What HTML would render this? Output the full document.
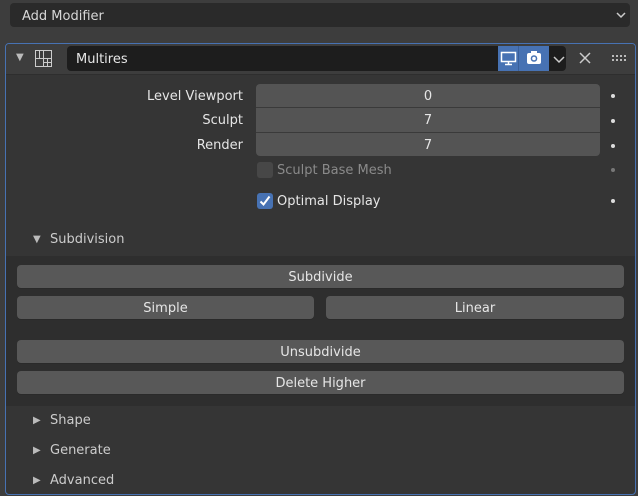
<!DOCTYPE html><html><head><style>
body{margin:0;width:638px;height:496px;background:#3d3d3d;font-family:"DejaVu Sans","Liberation Sans",sans-serif;font-size:13px;color:#e6e6e6;position:relative;overflow:hidden}
.a{position:absolute}
.btn{position:absolute;background:#585858;border-radius:4px;text-align:center;line-height:25px;height:23px;box-shadow:0 1px 0 #2a2a2a}
.lbl{position:absolute;text-align:right;width:243px;left:0;line-height:25px}
.dot{position:absolute;left:611px;width:4px;height:4px;border-radius:2px;background:#ddd}
.tri{position:absolute;color:#bbb;font-size:10px}
</style></head><body>
<div class="a" style="left:10px;top:3px;width:620px;height:24px;background:#2a2a2a;border-radius:4px"></div>
<div class="a" style="left:22px;top:4px;line-height:25px;color:#d8d8d8">Add Modifier</div>
<svg class="a" style="left:616px;top:12px" width="10" height="7"><path d="M1 1L5 5L9 1" stroke="#ccc" stroke-width="1.5" fill="none"/></svg>
<div class="a" style="left:5px;top:43px;width:629px;height:450px;border:1px solid #4772b3;border-radius:4px;background:#353535;overflow:hidden">
 <div class="a" style="left:0;top:0;width:629px;height:30px;background:#3d3d3d;border-bottom:1px solid #2e2e2e"></div>
 <div class="a" style="left:0;top:212px;width:629px;height:150px;background:#2e2e2e"></div>
</div>
<div class="tri" style="left:16px;top:52px">▼</div>
<svg class="a" style="left:35px;top:50px" width="17" height="17"><g stroke="#ccc" stroke-width="1" fill="none"><rect x="0.5" y="0.5" width="16" height="16"/><path d="M8.5 0V17M12.5 8V17M0 8.5H17M8 12.5H17M4.5 0V8"/></g></svg>
<div class="a" style="left:67px;top:46px;width:499px;height:25px;background:#1d1d1d;border-radius:4px"></div>
<div class="a" style="left:76px;top:47px;line-height:25px">Multires</div>
<div class="a" style="left:498px;top:46px;width:20px;height:25px;background:#4772b3"></div>
<div class="a" style="left:518px;top:46px;width:30px;height:25px;background:#4772b3;border-left:1px solid #3a5f99"></div>
<svg class="a" style="left:500px;top:51px" width="18" height="15"><rect x="1.5" y="1.5" width="14" height="9" stroke="#fff" stroke-width="1.5" fill="none"/><path d="M8.5 11V13M5 13.5H12" stroke="#fff" stroke-width="1.5"/></svg>
<svg class="a" style="left:526px;top:50px" width="16" height="16"><rect x="1" y="3" width="14" height="11" rx="2" fill="#fff"/><rect x="5" y="1" width="6" height="3" fill="#fff"/><circle cx="8" cy="8.5" r="3.3" fill="#4772b3"/><circle cx="8" cy="8.5" r="1.8" fill="#fff"/></svg>
<svg class="a" style="left:553px;top:56px" width="12" height="8"><path d="M1 1L6 6L11 1" stroke="#ccc" stroke-width="1.5" fill="none"/></svg>
<svg class="a" style="left:579px;top:52px" width="12" height="12"><path d="M1 1L11 11M11 1L1 11" stroke="#ccc" stroke-width="1.5"/></svg>
<svg class="a" style="left:612px;top:55px" width="14" height="6"><g fill="#bbb"><rect x="0" y="0" width="2" height="2"/><rect x="4" y="0" width="2" height="2"/><rect x="8" y="0" width="2" height="2"/><rect x="12" y="0" width="2" height="2"/><rect x="0" y="4" width="2" height="2"/><rect x="4" y="4" width="2" height="2"/><rect x="8" y="4" width="2" height="2"/><rect x="12" y="4" width="2" height="2"/></g></svg>

<div class="lbl" style="top:84px">Level Viewport</div>
<div class="lbl" style="top:108px">Sculpt</div>
<div class="lbl" style="top:133px">Render</div>
<div class="a" style="left:256px;top:84px;width:344px;height:72px;background:#545454;border-radius:4px"></div>
<div class="a" style="left:256px;top:107px;width:344px;height:1px;background:#3a3a3a"></div>
<div class="a" style="left:256px;top:132px;width:344px;height:1px;background:#3a3a3a"></div>
<div class="a" style="left:256px;top:84px;width:344px;line-height:25px;text-align:center">0</div>
<div class="a" style="left:256px;top:108px;width:344px;line-height:25px;text-align:center">7</div>
<div class="a" style="left:256px;top:133px;width:344px;line-height:25px;text-align:center">7</div>
<div class="dot" style="top:94px"></div><div class="dot" style="top:119px"></div><div class="dot" style="top:144px"></div>
<div class="a" style="left:257px;top:162px;width:16px;height:16px;background:#474747;border-radius:3px"></div>
<div class="a" style="left:277px;top:160px;line-height:22px;color:#8a8a8a">Sculpt Base Mesh</div>
<div class="dot" style="top:168px;background:#777"></div>
<div class="a" style="left:257px;top:193px;width:16px;height:16px;background:#4772b3;border-radius:3px"></div>
<svg class="a" style="left:258px;top:194px" width="14" height="14"><path d="M2.5 7.5L5.5 10.5L11.5 2.5" stroke="#fff" stroke-width="2" fill="none"/></svg>
<div class="a" style="left:277px;top:191px;line-height:22px">Optimal Display</div>
<div class="dot" style="top:199px"></div>

<div class="tri" style="left:33px;top:234px">▼</div>
<div class="a" style="left:50px;top:229px;line-height:22px;color:#ccc">Subdivision</div>
<div class="btn" style="left:17px;top:265px;width:607px">Subdivide</div>
<div class="btn" style="left:17px;top:296px;width:297px">Simple</div>
<div class="btn" style="left:326px;top:296px;width:298px">Linear</div>
<div class="btn" style="left:17px;top:340px;width:607px">Unsubdivide</div>
<div class="btn" style="left:17px;top:371px;width:607px">Delete Higher</div>

<div class="tri" style="left:33px;top:415px">▶</div>
<div class="a" style="left:50px;top:410px;line-height:22px;color:#ccc">Shape</div>
<div class="tri" style="left:33px;top:445px">▶</div>
<div class="a" style="left:50px;top:440px;line-height:22px;color:#ccc">Generate</div>
<div class="tri" style="left:33px;top:475px">▶</div>
<div class="a" style="left:50px;top:470px;line-height:22px;color:#ccc">Advanced</div>
</body></html>
